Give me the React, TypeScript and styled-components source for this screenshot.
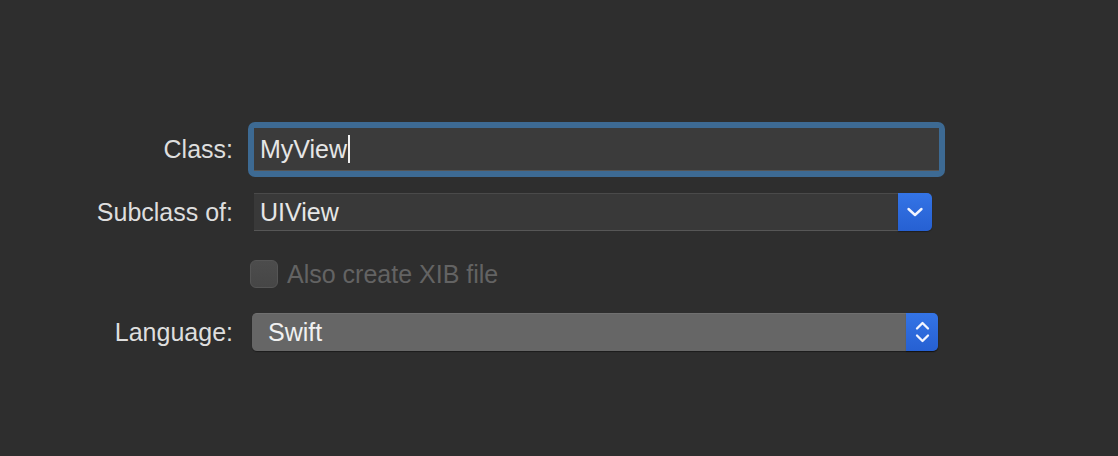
import styled, { createGlobalStyle } from "styled-components"

const GlobalStyle = createGlobalStyle`
    html, body {
        margin: 0;
        padding: 0;
        background: #2e2e2e;
        font-family: "Liberation Sans", Arial, sans-serif;
    }
`

const ChevronDown = () => (
    <svg width="18" height="10" viewBox="0 0 18 10">
        <path d="M2.5 2 L9 8 L15.5 2" fill="none" stroke="#f2f5ff" strokeWidth="2.4" strokeLinecap="round" strokeLinejoin="round" />
    </svg>
)

const UpDown = () => (
    <svg width="15" height="26" viewBox="0 0 15 26">
        <path d="M2 9.5 L7.5 4 L13 9.5" fill="none" stroke="#f2f5ff" strokeWidth="2.3" strokeLinecap="round" strokeLinejoin="round" />
        <path d="M2 16.5 L7.5 22 L13 16.5" fill="none" stroke="#f2f5ff" strokeWidth="2.3" strokeLinecap="round" strokeLinejoin="round" />
    </svg>
)

export default function App() {
    return (
        <>
            <GlobalStyle />
            <StyledPage>
                <StyledForm>
                    <StyledRow $height={55} $top={0}>
                        <StyledLabel>Class:</StyledLabel>
                        <StyledFocusRing>
                            <StyledTextField>
                                MyView<StyledCaret />
                            </StyledTextField>
                        </StyledFocusRing>
                    </StyledRow>
                    <StyledRow $height={38} $top={16}>
                        <StyledLabel>Subclass of:</StyledLabel>
                        <StyledCombo>
                            <StyledComboText>UIView</StyledComboText>
                            <StyledBlueButton $width={34}>
                                <ChevronDown />
                            </StyledBlueButton>
                        </StyledCombo>
                    </StyledRow>
                    <StyledRow $height={28} $top={29}>
                        <StyledLabel />
                        <StyledCheckRow>
                            <StyledCheckbox />
                            <StyledCheckText>Also create XIB file</StyledCheckText>
                        </StyledCheckRow>
                    </StyledRow>
                    <StyledRow $height={38} $top={25}>
                        <StyledLabel>Language:</StyledLabel>
                        <StyledPopup>
                            <StyledPopupText>Swift</StyledPopupText>
                            <StyledBlueButton $width={32}>
                                <UpDown />
                            </StyledBlueButton>
                        </StyledPopup>
                    </StyledRow>
                </StyledForm>
            </StyledPage>
        </>
    )
}

const StyledPage = styled.div`
    width: 1118px;
    height: 456px;
    background: #2e2e2e;
    padding-top: 122px;
    box-sizing: border-box;
`

const StyledForm = styled.div`
    display: flex;
    flex-direction: column;
`

const StyledRow = styled.div<{ $height: number; $top: number }>`
    display: flex;
    align-items: center;
    height: ${p => p.$height}px;
    margin-top: ${p => p.$top}px;
`

const StyledLabel = styled.div`
    width: 233px;
    flex-shrink: 0;
    text-align: right;
    color: #dedede;
    font-size: 25px;
    padding-right: 21px;
`

const StyledFocusRing = styled.div`
    width: 697px;
    height: 55px;
    margin-left: -6px;
    box-sizing: border-box;
    padding: 6px;
    border-radius: 7px;
    background: #3d6a93;
`

const StyledTextField = styled.div`
    height: 100%;
    background: #3b3b3b;
    box-sizing: border-box;
    padding-left: 6px;
    display: flex;
    align-items: center;
    color: #e6e6e6;
    font-size: 25px;
    border-bottom: 1px solid #555;
`

const StyledCaret = styled.span`
    display: inline-block;
    width: 2px;
    height: 28px;
    margin-left: 1px;
    background: #f0f0f0;
`

const StyledCombo = styled.div`
    width: 678px;
    height: 38px;
    display: flex;
`

const StyledComboText = styled.div`
    flex: 1;
    background: #393939;
    border-top: 1px solid #4a4a4a;
    border-bottom: 1px solid #565656;
    box-sizing: border-box;
    padding-left: 6px;
    display: flex;
    align-items: center;
    color: #e6e6e6;
    font-size: 25px;
`

const StyledBlueButton = styled.div<{ $width: number }>`
    width: ${p => p.$width}px;
    flex-shrink: 0;
    background: linear-gradient(#3474e6, #2660d2);
    border-radius: 0 5px 5px 0;
    box-shadow: 0 1px 1px rgba(0, 0, 0, 0.35);
    display: flex;
    align-items: center;
    justify-content: center;
`

const StyledCheckRow = styled.div`
    display: flex;
    align-items: center;
    gap: 9px;
    margin-left: -4px;
`

const StyledCheckbox = styled.div`
    width: 28px;
    height: 28px;
    box-sizing: border-box;
    border-radius: 6px;
    background: linear-gradient(#4c4c4c, #464646);
    border: 1px solid #555;
`

const StyledCheckText = styled.span`
    color: #636363;
    font-size: 25px;
`

const StyledPopup = styled.div`
    width: 686px;
    height: 38px;
    margin-left: -2px;
    display: flex;
    border-radius: 5px;
    box-shadow: 0 1px 1px rgba(0, 0, 0, 0.4);
`

const StyledPopupText = styled.div`
    flex: 1;
    background: #666;
    border-top: 1px solid #707070;
    border-radius: 5px 0 0 5px;
    box-sizing: border-box;
    padding-left: 16px;
    display: flex;
    align-items: center;
    color: #f0f0f0;
    font-size: 25px;
`
